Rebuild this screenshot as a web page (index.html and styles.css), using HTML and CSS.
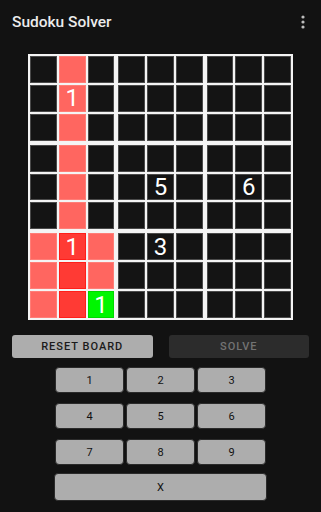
FILE: index.html
```html
<!DOCTYPE html>
<html>
<head>
<meta charset="utf-8">
<link rel="stylesheet" href="styles.css">
</head>
<body>
<div class="app">
  <header class="bar">
    <span class="title">Sudoku Solver</span>
    <svg class="menu" width="4" height="14" viewBox="0 0 4 14"><circle cx="2" cy="2" r="1.6" fill="#bdbdbd"/><circle cx="2" cy="7" r="1.6" fill="#bdbdbd"/><circle cx="2" cy="12" r="1.6" fill="#bdbdbd"/></svg>
  </header>
  <div class="board" id="board"></div>
  <div class="actions">
    <button class="btn reset">RESET BOARD</button>
    <button class="btn solve">SOLVE</button>
  </div>
  <div class="keypad">
    <button class="key">1</button><button class="key">2</button><button class="key">3</button>
    <button class="key">4</button><button class="key">5</button><button class="key">6</button>
    <button class="key">7</button><button class="key">8</button><button class="key">9</button>
    <button class="key wide">X</button>
  </div>
</div>
<script src="app.js"></script>
</body>
</html>
```
FILE: styles.css
```css
html, body { margin: 0; padding: 0; background: #121212; }
body { font-family: Roboto, "Noto Sans", sans-serif; width: 321px; height: 512px; overflow: hidden; }
.bar { height: 44px; display: flex; align-items: center; justify-content: space-between; padding: 0 16px 0 12px; }
.title { color: #ececec; font-size: 15.5px; font-weight: 500; letter-spacing: 0; }
.menu { margin-top: -1px; }
.board { margin: 10px 0 0 28px; width: 261px; height: 262px; background: #f4f4f4; padding: 2px; display: grid; grid-template-columns: repeat(3, 1fr); grid-template-rows: repeat(3, 1fr); gap: 4px; }
.box { display: grid; grid-template-columns: repeat(3, 1fr); grid-template-rows: repeat(3, 1fr); gap: 2px; }
.cell { background: #141414; border: 1px solid #4a4a4a; display: flex; align-items: center; justify-content: center; color: #fff; font-size: 24px; font-weight: 400; line-height: 1; }
.cell.pink { background: #ff6660; border-color: #ff7d77; }
.cell.red { background: #ff3a34; border-color: #ff1f1a; }
.cell.green { background: #00f600; border-color: #00d800; }
.actions { display: flex; gap: 16px; padding: 0 12px; margin-top: 15px; }
.btn { flex: 1; height: 23px; border: none; border-radius: 3px; font-family: Roboto, sans-serif; font-size: 11px; font-weight: 500; letter-spacing: 1px; padding: 0; }
.reset { background: #adadad; color: #1a1a1a; }
.solve { background: #2c2c2c; color: #737373; }
.keypad { margin: 9px 0 0 55px; width: 211px; display: grid; grid-template-columns: repeat(3, 1fr); column-gap: 2px; row-gap: 10px; }
.key { height: 26px; background: #adadad; border: 1px solid #2a2a2a; border-radius: 4px; color: #111; font-family: Roboto, sans-serif; font-size: 11px; padding: 0; }
.key.wide { grid-column: 1 / 4; height: 28px; margin: -2px -1px 0 -1px; }
```
FILE: app.js
```js
var vals = {"1,1":"1","4,4":"5","4,7":"6","6,1":"1","6,4":"3","8,2":"1"};
function cls(r,c){
  if (r===8 && c===2) return "green";
  if (r>=6 && c===1) return "red";
  if (r>=6 && c<=2) return "pink";
  if (c===1) return "pink";
  return "";
}
var board = document.getElementById("board");
for (var b=0;b<9;b++){
  var box=document.createElement("div"); box.className="box";
  var br=Math.floor(b/3)*3, bc=(b%3)*3;
  for (var i=0;i<9;i++){
    var r=br+Math.floor(i/3), c=bc+(i%3);
    var d=document.createElement("div");
    d.className="cell "+cls(r,c);
    d.textContent=vals[r+","+c]||"";
    box.appendChild(d);
  }
  board.appendChild(box);
}
```
